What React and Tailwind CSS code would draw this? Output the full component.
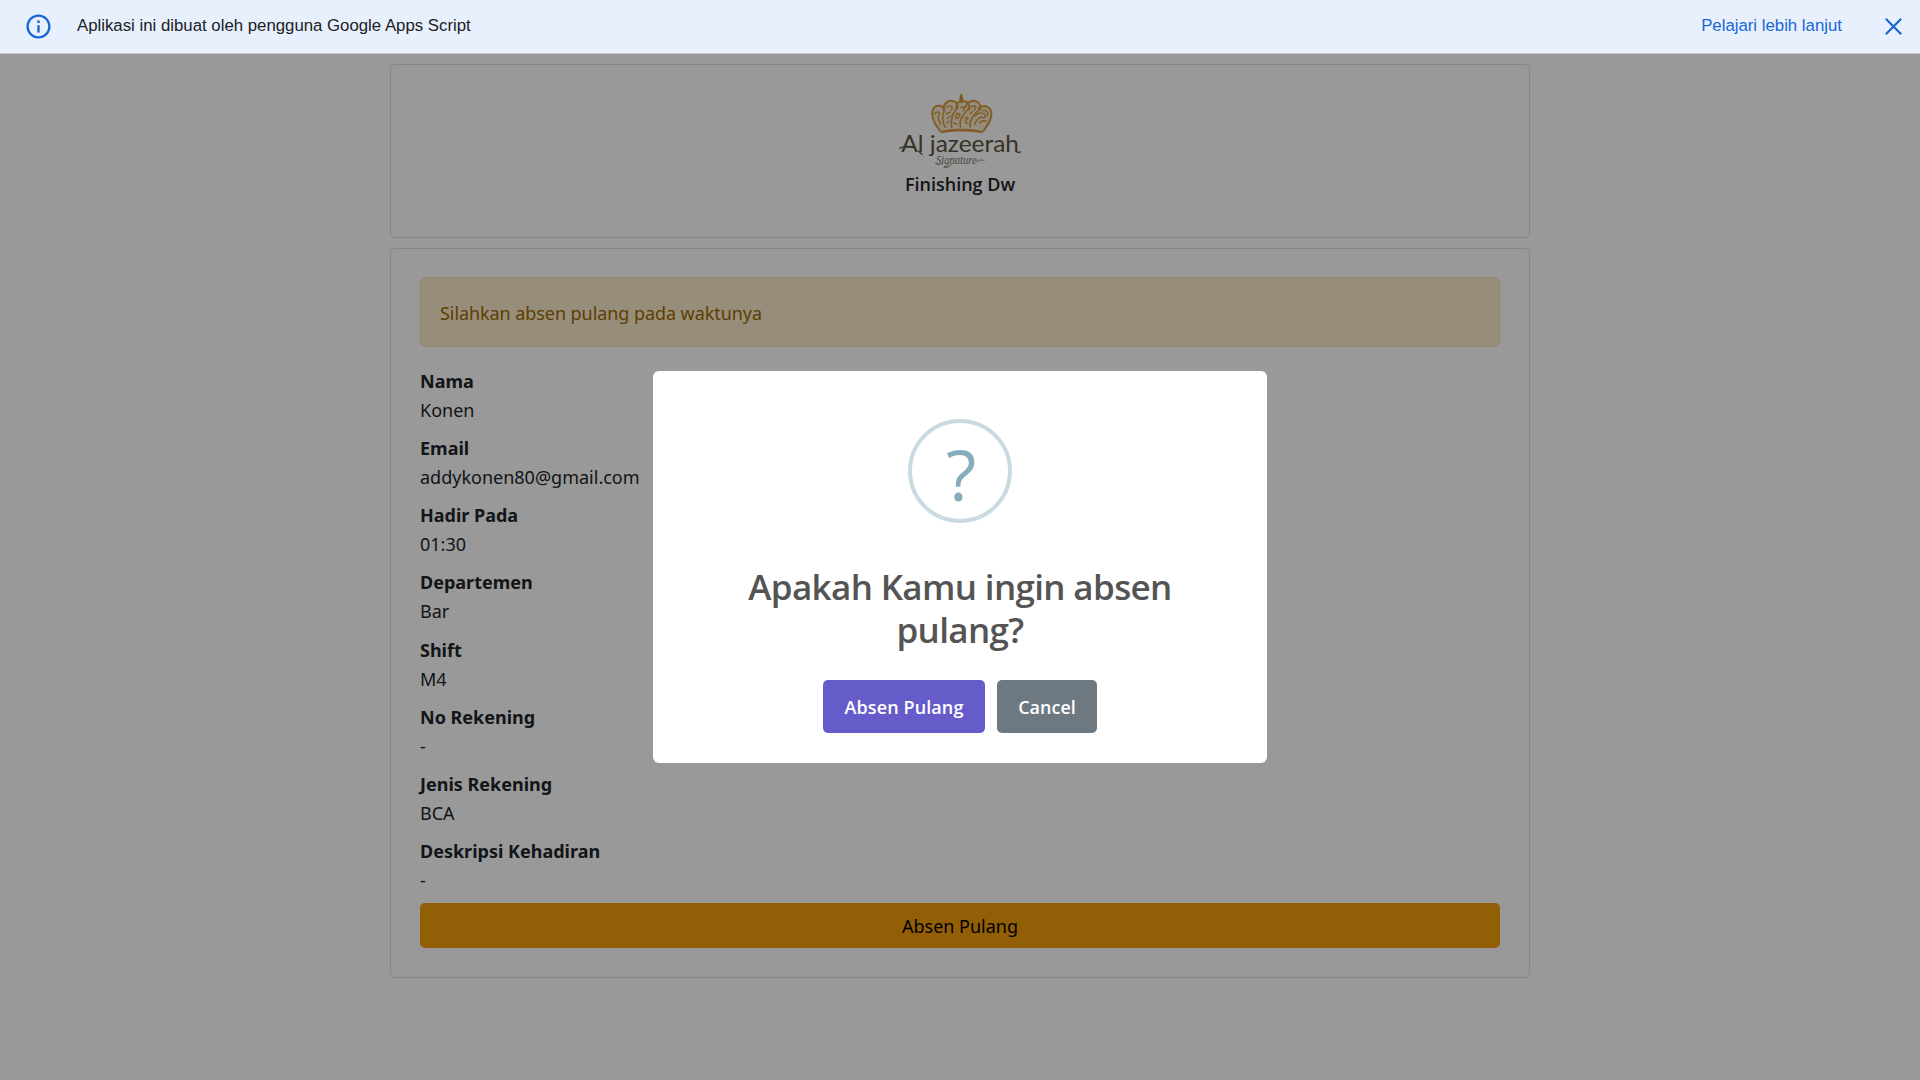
import React from "react";

const fields = [
  ["Nama", "Konen"],
  ["Email", "addykonen80@gmail.com"],
  ["Hadir Pada", "01:30"],
  ["Departemen", "Bar"],
  ["Shift", "M4"],
  ["No Rekening", "-"],
  ["Jenis Rekening", "BCA"],
  ["Deskripsi Kehadiran", "-"],
];

function Logo() {
  return (
    <svg viewBox="0 0 390 246" className="h-[82px] w-[130px] shrink-0">
      <path d="M134 127C115 108 106 88 113 67C119 50 136 51 141 56C147 42 162 36 175 39C183 38 189 44 190 48C196 39 212 37 221 46C232 39 248 42 253 53C270 50 287 58 289 75C291 97 277 112 266 128C224 117 172 117 134 127Z" fill="#dfa64c" opacity="0.25" />
      <g fill="none" stroke="#d99c3f" strokeWidth="6" strokeLinecap="round" strokeLinejoin="round">
        <path d="M134 127C119 108 106 88 113 67C119 50 141 49 147 64M147 68C143 48 157 36 174 39C185 41 190 50 188 60M184 61C183 44 195 37 204 40C217 38 226 49 222 65M213 56C215 38 237 34 250 44C256 50 258 57 255 65M251 61C268 47 287 57 289 75C291 97 277 112 266 128" />
        <path d="M149 64C139 85 143 106 151 118M187 59C173 77 166 91 170 118M220 63C206 79 191 91 196 117M254 64C239 79 224 91 225 117" strokeWidth="5" />
        <path d="M119 78C127 67 138 72 131 83C125 93 136 96 135 108M155 58C166 49 176 58 169 66M154 78L165 72M157 91L167 84M155 104L162 101M198 59C210 51 213 60 204 68M187 76C178 87 183 96 190 89C199 80 192 76 187 76ZM176 105L186 108M229 57C239 48 247 58 238 66M225 77L232 71M209 91C219 83 223 91 214 96C207 101 213 107 218 105M240 84C250 73 262 73 270 80C275 89 265 92 258 87C249 91 242 99 239 110M263 68C274 64 282 74 277 84M254 105C260 98 267 97 274 100" strokeWidth="4.5" />
      </g>
      <path d="M199 15C194 25 191 32 195 42L199 47L203 42C207 32 204 25 199 15Z" fill="#d4942f" />
      <path d="M132 129C172 119 226 119 266 129L261 136C225 129 173 129 139 136Z" fill="#d99c3f" />
      <text x="19" y="193" textLength="353" lengthAdjust="spacingAndGlyphs" fill="#5a5642" className="font-['Lato',sans-serif] text-[72px]">
        Al jazeerah
      </text>
      <path d="M13 181C29 173 46 175 57 179M70 188Q76 196 82 200M365 192Q371 195 377 191" fill="none" stroke="#5a5642" strokeWidth="4" />
      <text x="123" y="227" textLength="122" lengthAdjust="spacingAndGlyphs" fill="#7d7968" className="font-['Liberation_Serif',serif] text-[38px] italic">
        Signature
      </text>
      <path d="M242 221Q255 213 269 217M120 224Q130 236 143 226M146 238Q162 243 171 226" fill="none" stroke="#7d7968" strokeWidth="2.2" />
    </svg>
  );
}

function Banner() {
  return (
    <header className="flex h-[54px] items-center border-b border-[#c4c8d0] bg-[#e8f0fe] pr-[15px] pl-[24px] font-['Liberation_Sans',sans-serif] text-[16.8px]">
      <svg viewBox="0 0 24 24" className="size-[29px] shrink-0" fill="#1967d2">
        <path d="M11 7h2v2h-2zM11 11h2v6h-2zM12 2C6.48 2 2 6.48 2 12s4.48 10 10 10 10-4.48 10-10S17.52 2 12 2zm0 18c-4.41 0-8-3.59-8-8s3.59-8 8-8 8 3.59 8 8-3.59 8-8 8z" />
      </svg>
      <span className="-mt-px ml-[24px] text-[#202124]">Aplikasi ini dibuat oleh pengguna Google Apps Script</span>
      <a className="-mt-px ml-auto text-[#1967d2]">Pelajari lebih lanjut</a>
      <svg viewBox="0 0 24 24" className="ml-[40px] size-[23px] shrink-0" fill="none" stroke="#1967d2" strokeWidth="2.3">
        <path d="M4 4L20 20M20 4L4 20" />
      </svg>
    </header>
  );
}

function Modal() {
  return (
    <div className="flex h-[392px] w-[614px] flex-col items-center rounded-[6px] bg-white pt-[48px]">
      <div className="flex size-[104px] items-center justify-center rounded-full border-4 border-[#c9dae1] text-[#87adbd]">
        <span className="pt-[6px] pl-[2px] font-['Open_Sans',sans-serif] text-[70px] leading-none">?</span>
      </div>
      <h2 className="mt-[42px] w-[500px] text-center font-['Open_Sans',sans-serif] text-[35px] leading-[43px] font-semibold tracking-[-0.65px] text-[#545454]">
        Apakah Kamu ingin absen pulang?
      </h2>
      <div className="mt-[29px] flex gap-[12px] font-['Open_Sans',sans-serif] font-semibold text-white">
        <button className="h-[53px] w-[162px] rounded-[5px] bg-[#665cc9] pt-[2px] tracking-[0.1px]">Absen Pulang</button>
        <button className="h-[53px] w-[100px] rounded-[5px] bg-[#6e7881] pt-[2px]">Cancel</button>
      </div>
    </div>
  );
}

export default function App() {
  return (
    <div className="flex h-screen flex-col overflow-hidden bg-white font-['Noto_Sans',sans-serif] text-[18px] text-[#212529]">
      <Banner />
      <main className="relative flex-1">
        <div className="mx-auto flex w-[1140px] flex-col gap-[10px] pt-[10px]">
          <section className="flex h-[174px] flex-col items-center rounded-[5px] border border-black/[0.125] pt-[23px]">
            <Logo />
            <h1 className="font-['Open_Sans',sans-serif] leading-[29px] font-semibold">Finishing Dw</h1>
          </section>
          <section className="h-[730px] rounded-[5px] border border-black/[0.125] px-[29px] pt-[28px]">
            <div className="flex h-[70px] items-center rounded-[5px] border border-[#ffe0b0] bg-[#faedcb] px-[19px] pt-[2px] tracking-[-0.07px] text-[#9d6800]">
              Silahkan absen pulang pada waktunya
            </div>
            <dl className="h-[556px] pt-[20px]">
              {fields.map(([label, value]) => (
                <div key={label} className="h-[67.14px] leading-[29px]">
                  <dt className="font-bold">{label}</dt>
                  <dd>{value}</dd>
                </div>
              ))}
            </dl>
            <button className="h-[45px] w-full rounded-[5px] bg-[#f39e0a] pt-[2px] text-black">Absen Pulang</button>
          </section>
        </div>
        <div className="absolute inset-0 flex items-center justify-center bg-black/40">
          <Modal />
        </div>
      </main>
    </div>
  );
}
